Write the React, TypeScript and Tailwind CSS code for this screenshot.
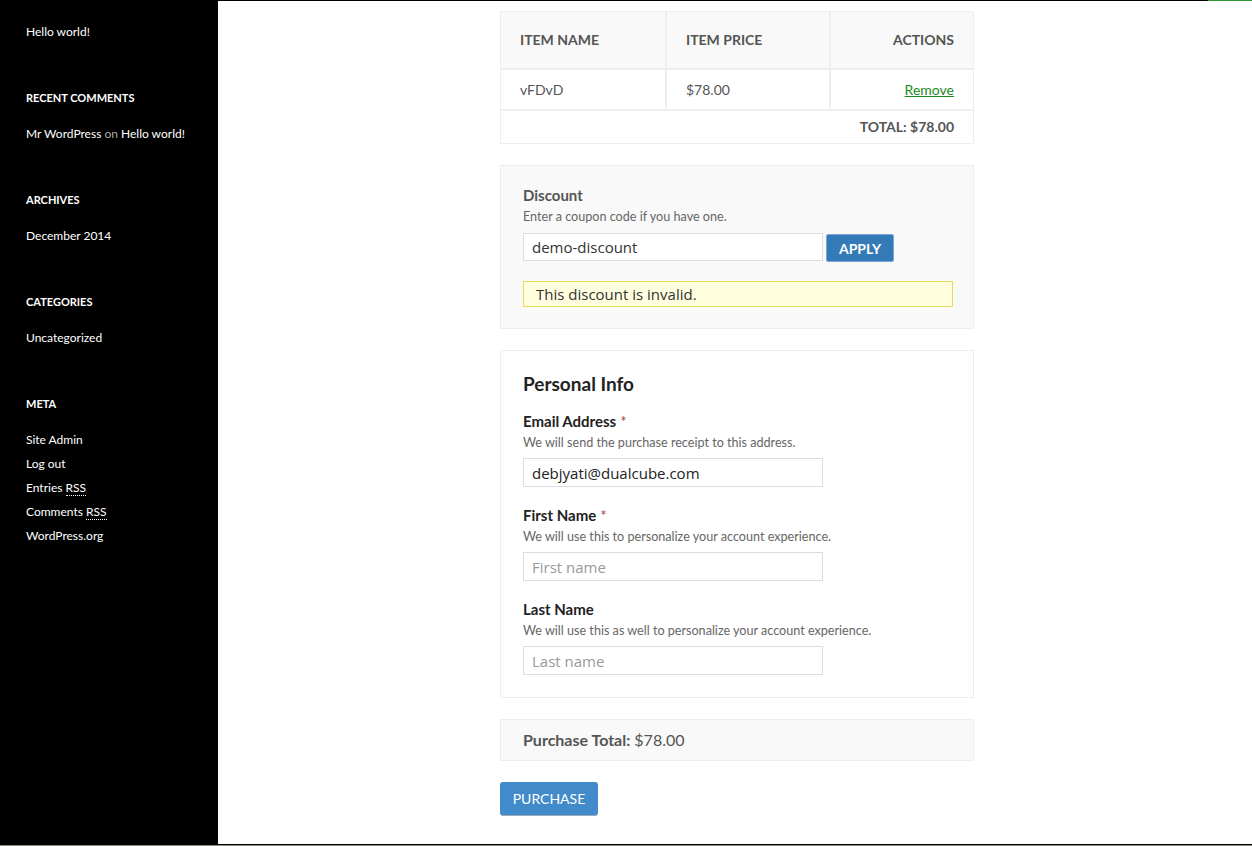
import React from 'react';

const lato = "font-['Lato','Open_Sans',sans-serif]";
const field = "font-['Open_Sans','Noto_Sans',sans-serif]";

function SidebarWidget({ title, children }: { title: string; children: React.ReactNode }) {
    return (
        <div className="mt-[46px]">
            <h2 className="text-[11px] leading-4 font-bold uppercase text-white">{title}</h2>
            <ul className="mt-4">{children}</ul>
        </div>
    );
}

function Sidebar() {
    return (
        <aside className="w-[218px] shrink-0 bg-black pl-[26px] pt-[20px] text-[12px] text-white">
            <ul>
                <li className="leading-6">Hello world!</li>
            </ul>
            <SidebarWidget title="Recent Comments">
                <li className="leading-6">
                    Mr WordPress <span className="text-[#aaa]">on</span> Hello world!
                </li>
            </SidebarWidget>
            <SidebarWidget title="Archives">
                <li className="leading-6">December 2014</li>
            </SidebarWidget>
            <SidebarWidget title="Categories">
                <li className="leading-6">Uncategorized</li>
            </SidebarWidget>
            <SidebarWidget title="Meta">
                <li className="leading-6">Site Admin</li>
                <li className="leading-6">Log out</li>
                <li className="leading-6">
                    Entries <abbr className="no-underline border-b border-dotted border-white">RSS</abbr>
                </li>
                <li className="leading-6">
                    Comments <abbr className="no-underline border-b border-dotted border-white">RSS</abbr>
                </li>
                <li className="leading-6">WordPress.org</li>
            </SidebarWidget>
        </aside>
    );
}

function CartTable() {
    return (
        <div className="border border-[#eee] text-[14px] text-[#555]">
            {/* header */}
            <div className="grid grid-cols-[164px_162px_1fr] gap-x-[2px] bg-[#eee]">
                <div className="h-[56px] bg-[#f9f9f9] px-[19px] pb-px flex items-center font-bold uppercase">Item Name</div>
                <div className="h-[56px] bg-[#f9f9f9] px-[19px] pb-px flex items-center font-bold uppercase">Item Price</div>
                <div className="h-[56px] bg-[#f9f9f9] px-[19px] pb-px flex items-center justify-end font-bold uppercase">Actions</div>
            </div>
            <div className="h-[2px] bg-[#eee]" />
            <div className="grid grid-cols-[164px_162px_1fr] gap-x-[2px] bg-[#eee]">
                <div className="h-[39px] bg-white px-[19px] flex items-center">vFDvD</div>
                <div className="h-[39px] bg-white px-[19px] flex items-center">$78.00</div>
                <div className="h-[39px] bg-white px-[19px] flex items-center justify-end">
                    <a className="text-[#1e8a1e] underline">Remove</a>
                </div>
            </div>
            <div className="h-[2px] bg-[#eee]" />
            <div className="h-[32px] px-[19px] pb-px flex items-center justify-end font-bold bg-white">TOTAL: $78.00</div>
        </div>
    );
}

function DiscountBox() {
    return (
        <div className="mt-[21px] border border-[#eee] bg-[#f9f9f9] pl-[22px] pr-[20px] pt-[19px] pb-[21px]">
            <div className="text-[15px] leading-5 font-bold text-[#555]">Discount</div>
            <div className="mt-1 text-[12.6px] leading-4 text-[#666]">Enter a coupon code if you have one.</div>
            <div className="mt-2 flex items-start gap-[3px]">
                <input
                    readOnly
                    value="demo-discount"
                    className={`${field} w-[300px] h-[28px] border border-[#ddd] bg-white px-2 text-[15px] text-[#333] outline-none`}
                />
                <button className="mt-px h-[28px] w-[68px] rounded-[2px] border border-[#7aa7de] bg-[#337ab7] text-[14px] font-bold text-white">
                    APPLY
                </button>
            </div>
            <div className={`${field} mt-[19px] h-[26px] border border-[#e6db55] bg-[#ffffe0] pl-3 flex items-center text-[15px] text-[#333]`}>
                This discount is invalid.
            </div>
        </div>
    );
}

function Field({ label, required, help, value, placeholder }: {
    label: string; required?: boolean; help: string; value?: string; placeholder?: string;
}) {
    return (
        <div className="mt-[18px] first:mt-[15px]">
            <div className="text-[15px] leading-5 font-bold text-[#222]">
                {label}
                {required && <span className="ml-1 font-normal text-[#a94442]">*</span>}
            </div>
            <div className="mt-1 text-[12.6px] leading-4 text-[#666]">{help}</div>
            <input
                readOnly
                value={value}
                placeholder={placeholder}
                className={`${field} mt-[7px] block w-[300px] h-[29px] border border-[#ddd] bg-white px-2 text-[15px] text-[#222] placeholder:text-[#999] outline-none`}
            />
        </div>
    );
}

function PersonalInfo() {
    return (
        <div className="mt-[21px] border border-[#eee] bg-white px-[22px] pt-[21px] pb-[22px]">
            <h3 className="text-[19px] leading-6 font-bold text-[#222]">Personal Info</h3>
            <div>
                <Field label="Email Address" required help="We will send the purchase receipt to this address." value="debjyati@dualcube.com" />
                <Field label="First Name" required help="We will use this to personalize your account experience." placeholder="First name" />
                <Field label="Last Name" help="We will use this as well to personalize your account experience." placeholder="Last name" />
            </div>
        </div>
    );
}

export default function App() {
    return (
        <div className={`${lato} h-[846px] w-[1252px] flex flex-col overflow-hidden bg-white`}>
            <div className="flex h-[844px]">
                <Sidebar />
                <main className="flex-1 flex flex-col">
                    <div className="flex h-px shrink-0">
                        <div className="flex-1 bg-black" />
                        <div className="w-[44px] bg-[#2a9a2a]" />
                    </div>
                    <div className="ml-[282px] w-[474px] pt-[10px]">
                        <CartTable />
                        <DiscountBox />
                        <PersonalInfo />
                        <div className="mt-[21px] h-[42px] border border-[#eee] bg-[#f9f9f9] px-[22px] flex items-center text-[16px] text-[#555]">
                            <span className="font-bold">Purchase Total:</span>
                            <span className="ml-1">$78.00</span>
                        </div>
                        <button className="mt-[21px] h-[33px] w-[98px] rounded-[3px] bg-[#428bca] text-[14px] text-white shadow-[0_1px_0_#9ab]">
                            PURCHASE
                        </button>
                    </div>
                </main>
            </div>
            <div className="h-px bg-black" />
            <div className="h-px bg-[#8a8a80]" />
        </div>
    );
}
